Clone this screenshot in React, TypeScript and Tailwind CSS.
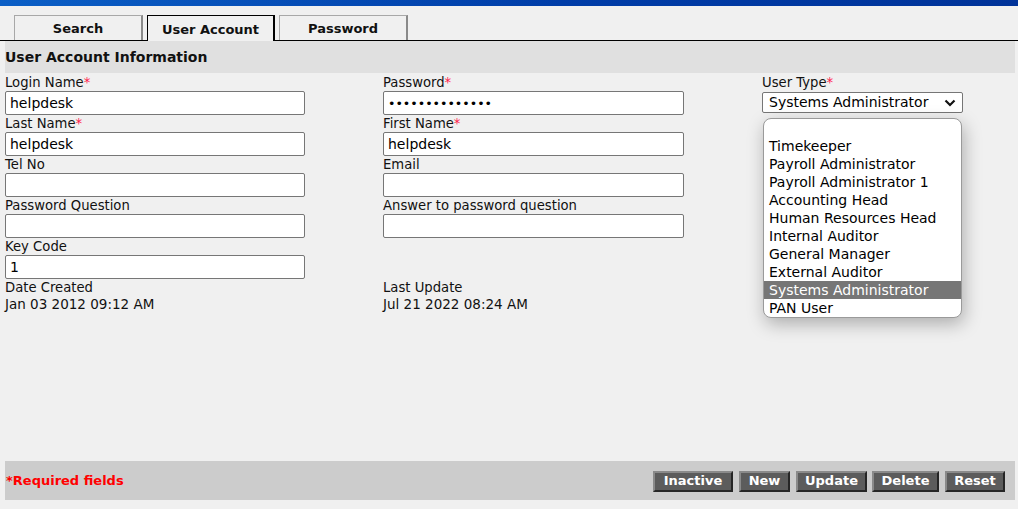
import React from "react";

const font = { fontFamily: '"DejaVu Sans", Verdana, sans-serif' };

function Label({ text, req }: { text: string; req?: boolean }) {
  return (
    <div className="h-[16px] leading-[16px] text-[13.2px] text-[#111]">
      {text}
      {req && <span className="text-[#ff1a4a]">*</span>}
    </div>
  );
}

function Field({ label, req, value, type, w }: { label: string; req?: boolean; value?: string; type?: string; w: string }) {
  return (
    <div className="mb-[1px]">
      <Label text={label} req={req} />
      <input
        type={type || "text"}
        readOnly
        value={value || ""}
        className={`${w} h-[24px] bg-white border border-[#767676] rounded-[2px] px-[4px] ${
          type === "password" ? "text-[12.6px]" : "text-[14px]"
        } text-black outline-none block`}
        style={font}
      />
    </div>
  );
}

function Tab({ text, active }: { text: string; active?: boolean }) {
  return active ? (
    <div className="w-[128px] h-[26px] -mb-px pt-[2px] bg-[#f0f0f0] border-l border-t border-r-2 border-black flex items-center justify-center text-[13px] font-bold text-[#111]">
      {text}
    </div>
  ) : (
    <div className="w-[129px] h-[25px] pt-[2px] bg-[#f0f0f0] border-l border-t border-[#a8a8a8] border-r-2 border-r-[#8a8a8a] flex items-center justify-center text-[13px] font-bold text-[#111]">
      {text}
    </div>
  );
}

function Btn({ text, w }: { text: string; w: string }) {
  return (
    <div
      className={`${w} h-[21px] flex items-center justify-center bg-[#5c5c5c] text-white text-[13px] font-bold border-2 border-t-[#8a8a8a] border-l-[#8a8a8a] border-r-[#262626] border-b-[#262626]`}
    >
      {text}
    </div>
  );
}

const options = [
  "",
  "Timekeeper",
  "Payroll Administrator",
  "Payroll Administrator 1",
  "Accounting Head",
  "Human Resources Head",
  "Internal Auditor",
  "General Manager",
  "External Auditor",
  "Systems Administrator",
  "PAN User",
];

export default function App() {
  return (
    <div className="w-[1018px] h-[509px] bg-[#f0f0f0] flex flex-col overflow-hidden" style={font}>
      <div className="h-[6px] bg-[linear-gradient(to_right,#0b5fc6,#003da8_55%,#003399)]" />
      <div className="mt-[9px] flex items-end gap-[4px] pl-[14px] border-b border-black h-[26px]">
        <Tab text="Search" />
        <Tab text="User Account" active />
        <Tab text="Password" />
      </div>
      <div className="pl-[5px] pr-[3px] flex-1 flex flex-col">
        <div className="h-[32px] bg-[#e0e0e0] flex items-center text-[14px] font-bold text-[#111]">
          User Account Information
        </div>
        <div className="grid grid-cols-[378px_379px_1fr] pt-[2px]">
          <div>
            <Field label="Login Name" req value="helpdesk" w="w-[300px]" />
            <Field label="Last Name" req value="helpdesk" w="w-[300px]" />
            <Field label="Tel No" w="w-[300px]" />
            <Field label="Password Question" w="w-[300px]" />
            <Field label="Key Code" value="1" w="w-[300px]" />
            <Label text="Date Created" />
            <div className="h-[16px] leading-[16px] text-[13.5px] text-[#111]">Jan 03 2012 09:12 AM</div>
          </div>
          <div>
            <Field label="Password" req type="password" value="helpdesk123456" w="w-[301px]" />
            <Field label="First Name" req value="helpdesk" w="w-[301px]" />
            <Field label="Email" w="w-[301px]" />
            <Field label="Answer to password question" w="w-[301px]" />
            <div className="h-[41px]" />
            <Label text="Last Update" />
            <div className="h-[16px] leading-[16px] text-[13.5px] text-[#111]">Jul 21 2022 08:24 AM</div>
          </div>
          <div className="relative">
            <Label text="User Type" req />
            <div className="mt-[1px] w-[201px] h-[21px] bg-white border border-[#767676] rounded-[2px] flex items-center pl-[6px] pr-[6px] text-[14px] text-black">
              <span className="flex-1">Systems Administrator</span>
              <svg width="12" height="8" viewBox="0 0 12 8">
                <polyline points="1.5,1.5 6,6 10.5,1.5" fill="none" stroke="#111" strokeWidth="2.2" />
              </svg>
            </div>
            <div className="absolute left-[1px] top-[43px] w-[199px] bg-white border border-[#9a9a9a] rounded-[8px] overflow-hidden shadow-[2px_6px_18px_rgba(0,0,0,0.28)] z-10">
              {options.map((o, i) => (
                <div
                  key={i}
                  className={`h-[18px] leading-[18px] pl-[5px] text-[14px] whitespace-nowrap ${
                    o === "Systems Administrator" ? "bg-[#767676] text-white" : "text-black"
                  }`}
                >
                  {o}
                </div>
              ))}
            </div>
          </div>
        </div>
        <div className="mt-auto mb-[9px] h-[39px] bg-[#cccccc] flex items-center pl-[1px] pr-[10px]">
          <span className="text-[13px] font-bold text-[#ff0000] flex-1">*Required fields</span>
          <div className="flex items-center mt-[1px]">
            <Btn text="Inactive" w="w-[80px]" />
            <div className="w-[6px]" />
            <Btn text="New" w="w-[51px]" />
            <div className="w-[6px]" />
            <Btn text="Update" w="w-[71px]" />
            <div className="w-[5px]" />
            <Btn text="Delete" w="w-[67px]" />
            <div className="w-[6px]" />
            <Btn text="Reset" w="w-[60px]" />
          </div>
        </div>
      </div>
    </div>
  );
}
